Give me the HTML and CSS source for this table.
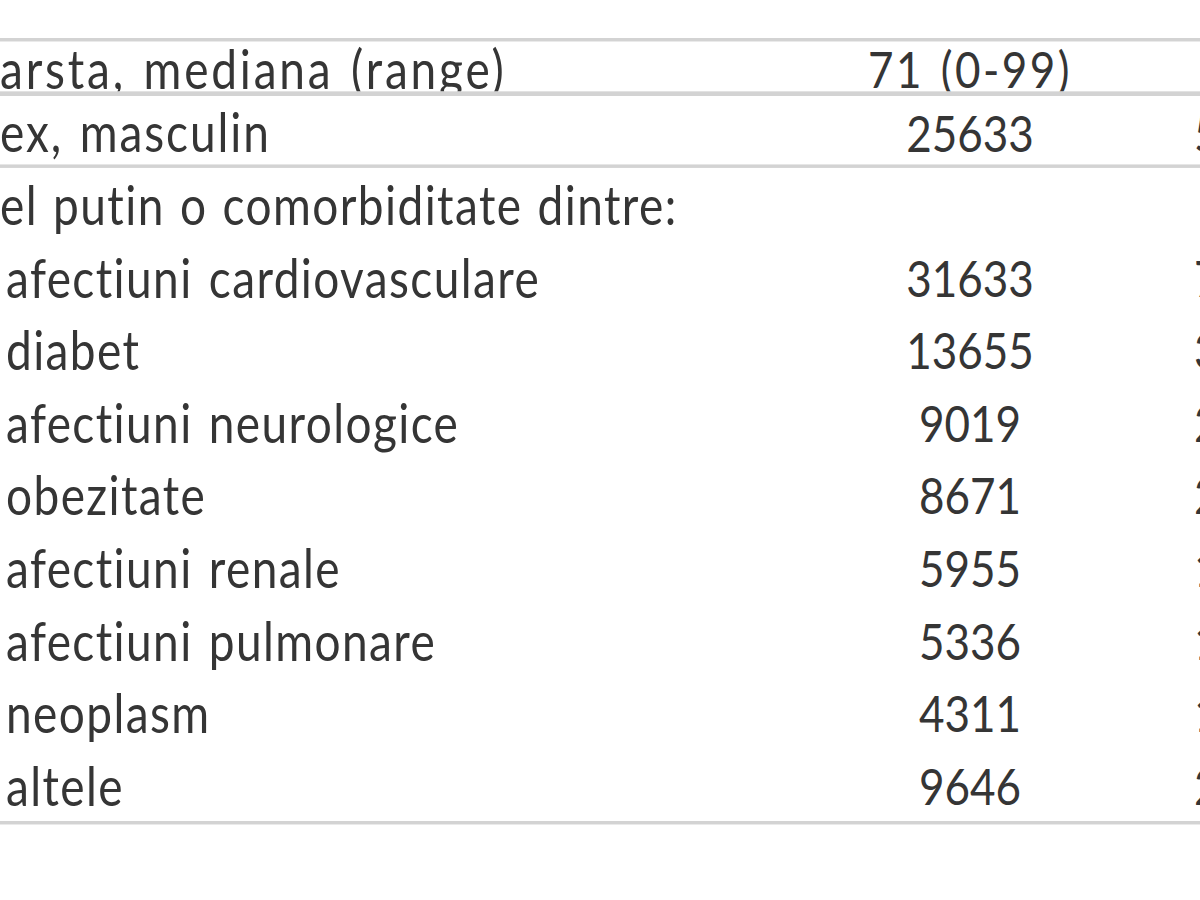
FILE: index.html
```html
<!DOCTYPE html>
<html lang="ro">
<head>
<meta charset="utf-8">
<title>Caracteristici pacienti</title>
<link rel="stylesheet" href="styles.css">
</head>
<body>
<div class="page">
  <div class="table">
    <div class="row row-age">
      <div class="lbl">arsta, mediana (range)</div>
      <div class="val">71 (0-99)</div>
      <div class="ext"></div>
    </div>
    <div class="row row-sex">
      <div class="lbl">ex, masculin</div>
      <div class="val">25633</div>
      <div class="ext">5</div>
    </div>
    <div class="row row-std">
      <div class="lbl lbl-head">el putin o comorbiditate dintre:</div>
      <div class="val"></div>
      <div class="ext"></div>
    </div>
    <div class="row row-std">
      <div class="lbl sub">afectiuni cardiovasculare</div>
      <div class="val">31633</div>
      <div class="ext">7</div>
    </div>
    <div class="row row-std">
      <div class="lbl sub">diabet</div>
      <div class="val">13655</div>
      <div class="ext">3</div>
    </div>
    <div class="row row-std">
      <div class="lbl sub">afectiuni neurologice</div>
      <div class="val">9019</div>
      <div class="ext">2</div>
    </div>
    <div class="row row-std">
      <div class="lbl sub">obezitate</div>
      <div class="val">8671</div>
      <div class="ext">2</div>
    </div>
    <div class="row row-std">
      <div class="lbl sub">afectiuni renale</div>
      <div class="val">5955</div>
      <div class="ext">1</div>
    </div>
    <div class="row row-std">
      <div class="lbl sub">afectiuni pulmonare</div>
      <div class="val">5336</div>
      <div class="ext">1</div>
    </div>
    <div class="row row-std">
      <div class="lbl sub">neoplasm</div>
      <div class="val">4311</div>
      <div class="ext">1</div>
    </div>
    <div class="row row-std row-last">
      <div class="lbl sub">altele</div>
      <div class="val">9646</div>
      <div class="ext">2</div>
    </div>
  </div>
</div>
</body>
</html>
```

FILE: styles.css
```css
html, body {
  margin: 0;
  padding: 0;
  background: #ffffff;
}

body {
  width: 1200px;
  height: 900px;
  overflow: hidden;
  font-family: "Lato", "Open Sans", sans-serif;
  color: #353535;
}

.page {
  width: 1200px;
  height: 900px;
  overflow: hidden;
}

.table {
  width: 1200px;
  margin-top: 38px;
  border-top: 3.45px solid #d3d3d3;
  transform: scaleY(1.16);
  transform-origin: 0 0;
  font-size: 44px;
}

.row {
  display: grid;
  grid-template-columns: 860px 220px 120px;
  overflow: hidden;
  white-space: nowrap;
  box-sizing: border-box;
}

.row-age {
  height: 46.5px;
  line-height: 47px;
  border-bottom: 4.3px solid #d3d3d3;
}

.row-sex {
  height: 62.05px;
  line-height: 62px;
  border-bottom: 3.45px solid #d3d3d3;
}

.row-std {
  height: 62.6px;
  padding-top: 3.5px;
  line-height: 57.4px;
}

.row-last {
  height: 66.05px;
  border-bottom: 3.45px solid #d3d3d3;
}

.lbl {
  padding-left: 0;
  font-size: 46px;
  letter-spacing: 1.4px;
  word-spacing: 3px;
}

.lbl-head {
  word-spacing: 2px;
}

.row-age .lbl {
  letter-spacing: 2.8px;
}

.row-sex .lbl {
  letter-spacing: 1.9px;
}

.lbl.sub {
  padding-left: 6px;
}

.val {
  text-align: center;
}

.row-age .val {
  letter-spacing: 2.5px;
  word-spacing: 3px;
}

.ext {
  padding-left: 114px;
  overflow: hidden;
}
```
